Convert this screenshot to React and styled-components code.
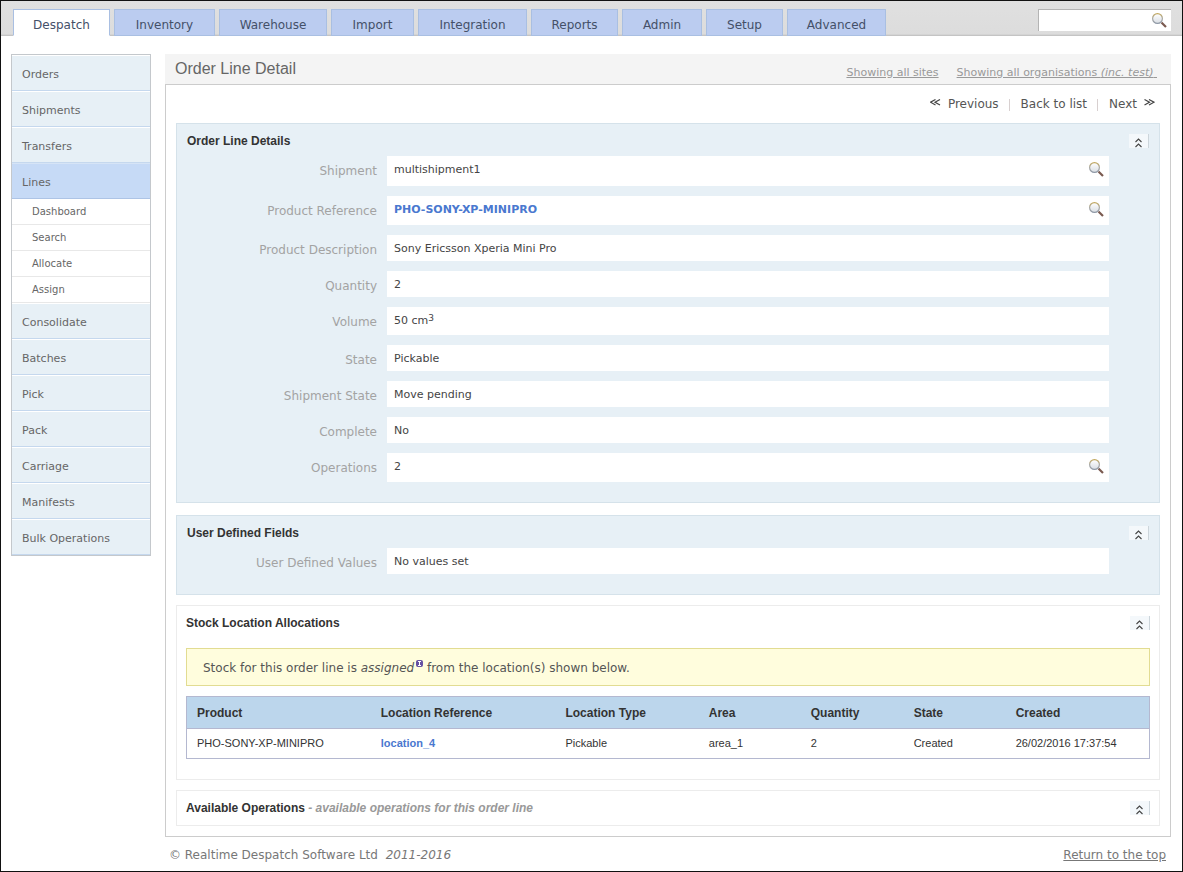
import React from "react";
import styled, { createGlobalStyle } from 'styled-components'

const GlobalStyle = createGlobalStyle`
  * { box-sizing: border-box; }
  body {
    margin: 0;
    background: #fff;
    color: #555;
    font: 12px/16px Verdana, "DejaVu Sans", sans-serif;
  }
  a { color: inherit; text-decoration: none; }
  ul { list-style: none; margin: 0; padding: 0; }
  h1, h2, p { margin: 0; }
`

const Page = styled.div`
  border: 1px solid #111;
  min-height: 100vh;
`

const Header = styled.header`
  display: flex;
  justify-content: space-between;
  align-items: flex-start;
  padding: 8px 11px 0 12px;
  height: 35px;
  background: linear-gradient(#e0e0e0, #dcdcdc);
  box-shadow: inset 0 -1px 0 #c4c4c4, inset 0 -2px 0 #d4d4d4;
`

const Tabs = styled.nav`
  display: flex;
  gap: 4px;
`

const Tab = styled.a`
  flex: 0 0 auto;
  min-width: ${props => props.$width}px;
  height: 27px;
  padding: 7px 10px 0;
  text-align: center;
  border: 1px solid #a9bfe2;
  border-bottom-color: ${props => props.$active ? '#fff' : '#a9bfe2'};
  background: ${props => props.$active ? '#fff' : '#bbccf0'};
  color: #445068;
`

const SearchForm = styled.form`
  display: flex;
  align-items: center;
  width: 133px;
  height: 22px;
  padding-right: 4px;
  background: #fff;
  border: solid #b4b4b4;
  border-width: 1px 0 0 1px;
`

const SearchInput = styled.input`
  flex: 1;
  min-width: 0;
  border: 0;
  outline: 0;
  background: transparent;
  font: inherit;
`

const IconButton = styled.button`
  display: flex;
  padding: 0;
  border: 0;
  background: none;
  cursor: pointer;
`

const Columns = styled.div`
  display: flex;
  align-items: flex-start;
  gap: 14px;
  padding: 18px 11px 0 10px;
`

const SideNav = styled.nav`
  flex: 0 0 140px;
  border: 1px solid #c4c8cc;
`

const SideLink = styled.a`
  display: block;
  height: 36px;
  padding: 11px 10px 0;
  font-size: 11px;
  border-top: 1px solid ${props => props.$active ? '#d6e4f6' : '#fff'};
  border-bottom: 1px solid ${props => props.$active ? '#adc4e6' : '#c5d8ee'};
  background: ${props => props.$active ? '#c6daf6' : '#e7f0f6'};
  color: #666;
`

const SubLink = styled.a`
  display: block;
  height: 26px;
  padding: 5px 20px 0;
  font-size: 10px;
  border-bottom: 1px solid #e8e8e8;
  color: #666;
`

const Main = styled.main`
  flex: 1;
  min-width: 0;
`

const TitleBar = styled.div`
  display: flex;
  justify-content: space-between;
  height: 30px;
  padding: 5px 14px 0 10px;
  background: #f4f4f4;
`

const Title = styled.h1`
  font: 16px/20px Arial, "Liberation Sans", sans-serif;
  color: #666;
`

const Filters = styled.div`
  display: flex;
  gap: 18px;
  padding-top: 6px;
  font-size: 11px;
  color: #999;
  white-space: pre;

  a { text-decoration: underline; }
`

const Content = styled.div`
  padding: 10px;
  border: 1px solid #ccc;
`

const Pager = styled.nav`
  display: flex;
  justify-content: flex-end;
  height: 28px;
  padding: 1px 5px 0 0;
  color: #555;

  a { display: flex; gap: 7px; }
  a + a::before {
    content: "";
    width: 1px;
    height: 12px;
    margin: 3px 4px 0 10px;
    background: #d8d0d0;
  }
  svg { margin-top: 3px; }
`

const Panel = styled.section`
  padding: ${props => props.$plain ? '0 9px' : '0 10px 20px'};
  margin-bottom: ${props => props.$gap || 0}px;
  border: 1px solid ${props => props.$plain ? '#ececec' : '#d5e2ea'};
  background: ${props => props.$plain ? '#fff' : '#e7f0f6'};
`

const PanelHead = styled.div`
  display: flex;
  justify-content: space-between;
  align-items: flex-start;
  height: ${props => props.$height}px;
  padding-top: 10px;
`

const PanelTitle = styled.h2`
  font: bold 12px/14px Arial, "Liberation Sans", sans-serif;
  color: #333;

  em { color: #999; }
`

const Collapse = styled.button`
  display: flex;
  justify-content: center;
  align-items: flex-end;
  width: 20px;
  height: 14px;
  padding: 0;
  border: 0;
  border-right: 1px solid #ccd5db;
  background: #f4f8fb;
  cursor: pointer;
`

const Fields = styled.dl`
  display: flex;
  flex-direction: column;
  gap: 10px;
  margin: 0 40px 0 0;
`

const Field = styled.div`
  display: flex;
  gap: 10px;
  min-height: ${props => props.$height}px;

  dt {
    flex: 0 0 190px;
    padding-top: 7px;
    text-align: right;
    color: #a3a3a3;
  }
  dd {
    flex: 1;
    display: flex;
    justify-content: space-between;
    align-items: flex-start;
    margin: 0;
    padding: 6px 5px 0 7px;
    background: #fff;
    color: #444;
    font-size: 11px;
  }
  sup { font-size: 9px; line-height: 0; vertical-align: 3px; }
`

const ValueLink = styled.a`
  font-weight: bold;
  color: #4a78cf;
`

const Notice = styled.p`
  margin-bottom: 10px;
  padding: 11px 16px 9px;
  border: 1px solid #e2dc92;
  background: #fffddd;

  svg { margin: 0 0 0 2px; vertical-align: 5px; }
`

const Table = styled.table`
  width: 100%;
  margin-bottom: 20px;
  table-layout: fixed;
  border-collapse: separate;
  border-spacing: 0;
  border: 1px solid #b4b8d0;
  font: 11px/14px Arial, "Liberation Sans", sans-serif;
  text-align: left;
  color: #333;

  th {
    height: 32px;
    padding: 0 10px;
    font-size: 12px;
    background: #bcd6ec;
    border-bottom: 1px solid #b4b8d0;
  }
  td { height: 29px; padding: 0 10px 2px; }
`

const Footer = styled.footer`
  display: flex;
  justify-content: space-between;
  padding: 10px 5px 0 4px;
  color: #777;

  a { text-decoration: underline; }
  em { margin-left: 4px; }
`

const tabs = [
  ['Despatch', 97], ['Inventory', 101], ['Warehouse', 108], ['Import', 83], ['Integration', 109],
  ['Reports', 87], ['Admin', 80], ['Setup', 77], ['Advanced', 99],
]

const sections = ['Orders', 'Shipments', 'Transfers', 'Lines', 'Consolidate', 'Batches', 'Pick', 'Pack', 'Carriage', 'Manifests', 'Bulk Operations']
const lineLinks = ['Dashboard', 'Search', 'Allocate', 'Assign']

const details = [
  { label: 'Shipment', value: 'multishipment1', height: 30, lookup: true },
  { label: 'Product Reference', value: <ValueLink href="#product">PHO-SONY-XP-MINIPRO</ValueLink>, height: 29, lookup: true },
  { label: 'Product Description', value: 'Sony Ericsson Xperia Mini Pro' },
  { label: 'Quantity', value: '2' },
  { label: 'Volume', value: <span>50 cm<sup>3</sup></span>, height: 28 },
  { label: 'State', value: 'Pickable' },
  { label: 'Shipment State', value: 'Move pending' },
  { label: 'Complete', value: 'No' },
  { label: 'Operations', value: '2', height: 29, lookup: true },
]

const columns = [
  ['Product', '19.1%'], ['Location Reference', '19.2%'], ['Location Type', '14.9%'], ['Area', '10.6%'],
  ['Quantity', '10.7%'], ['State', '10.6%'], ['Created', '14.9%'],
]

function Magnifier() {
  return (
    <svg width="15" height="15" viewBox="0 0 15 15" fill="none" aria-hidden="true">
      <defs>
        <linearGradient id="lens" x1="0" y1="0" x2="0" y2="1">
          <stop offset="0" stopColor="#fff" />
          <stop offset="1" stopColor="#d9dee4" />
        </linearGradient>
        <linearGradient id="rim" x1="0" y1="0" x2="0" y2="1">
          <stop offset="0" stopColor="#c2a85e" />
          <stop offset="0.5" stopColor="#a8a8a4" />
          <stop offset="1" stopColor="#8e98a6" />
        </linearGradient>
      </defs>
      <path d="M9.5 9.5L14 14" stroke="#7a5a50" strokeWidth="2.2" />
      <circle cx="5.5" cy="5.5" r="4.9" fill="url(#lens)" stroke="url(#rim)" strokeWidth="1.2" />
    </svg>
  )
}

function DoubleUp() {
  return (
    <svg width="7" height="10" viewBox="0 0 7 10" fill="none" stroke="#444" strokeWidth="1.1" aria-hidden="true">
      <path d="M.5 4L3.5 1L6.5 4M.5 9L3.5 6L6.5 9" />
    </svg>
  )
}

function DoubleArrow({ next }) {
  return (
    <svg width="11" height="7" viewBox="0 0 11 7" fill="none" stroke="#444" strokeWidth="1.2" aria-hidden="true">
      <path d={next ? "M.5 .5L5.5 3.2L.5 6M5 .5L10 3.2L5 6" : "M5.5 .5L.5 3.2L5.5 6M10 .5L5 3.2L10 6"} />
    </svg>
  )
}

function InfoIcon() {
  return (
    <svg width="7" height="7" viewBox="0 0 7 7" aria-hidden="true">
      <rect width="7" height="7" rx="2" fill="#6651a3" />
      <path d="M2 1.5H5M3.5 1.5V5.5M2 5.5H5" stroke="#fff" fill="none" />
    </svg>
  )
}

function Head({ children, height }) {
  return (
    <PanelHead $height={height}>
      <PanelTitle>{children}</PanelTitle>
      <Collapse type="button" aria-label="Collapse"><DoubleUp /></Collapse>
    </PanelHead>
  )
}

function DetailField({ label, value, height = 26, lookup }) {
  return (
    <Field $height={height}>
      <dt>{label}</dt>
      <dd>
        {value}
        {lookup && <IconButton type="button" aria-label={`View ${label}`}><Magnifier /></IconButton>}
      </dd>
    </Field>
  )
}

export default function App() {
  return (
    <Page id="top">
      <GlobalStyle />

      <Header>
        <Tabs>
          {tabs.map(([name, width], i) => (
            <Tab key={name} href={`#${name}`} $width={width} $active={i === 0}>{name}</Tab>
          ))}
        </Tabs>
        <SearchForm>
          <SearchInput type="text" aria-label="Search" />
          <IconButton type="button" aria-label="Search"><Magnifier /></IconButton>
        </SearchForm>
      </Header>

      <Columns>
        <SideNav>
          <ul>
            {sections.map(name => (
              <li key={name}>
                <SideLink href={`#${name}`} $active={name === 'Lines'}>{name}</SideLink>
                {name === 'Lines' && (
                  <ul>
                    {lineLinks.map(link => <li key={link}><SubLink href={`#${link}`}>{link}</SubLink></li>)}
                  </ul>
                )}
              </li>
            ))}
          </ul>
        </SideNav>

        <Main>
          <TitleBar>
            <Title>Order Line Detail</Title>
            <Filters>
              <a href="#sites">Showing all sites</a>
              <a href="#organisations">Showing all organisations <em>(inc. test)</em> </a>
            </Filters>
          </TitleBar>

          <Content>
            <Pager>
              <a href="#previous"><DoubleArrow />Previous</a>
              <a href="#list">Back to list</a>
              <a href="#next">Next<DoubleArrow next /></a>
            </Pager>

            <Panel $gap={12}>
              <Head height={32}>Order Line Details</Head>
              <Fields>
                {details.map(field => <DetailField key={field.label} {...field} />)}
              </Fields>
            </Panel>

            <Panel $gap={10}>
              <Head height={32}>User Defined Fields</Head>
              <Fields>
                <DetailField label="User Defined Values" value="No values set" />
              </Fields>
            </Panel>

            <Panel $plain $gap={10}>
              <Head height={42}>Stock Location Allocations</Head>
              <Notice>
                Stock for this order line is <em>assigned</em><InfoIcon /> from the location(s) shown below.
              </Notice>
              <Table>
                <colgroup>
                  {columns.map(([name, width]) => <col key={name} width={width} />)}
                </colgroup>
                <thead>
                  <tr>{columns.map(([name]) => <th key={name} scope="col">{name}</th>)}</tr>
                </thead>
                <tbody>
                  <tr>
                    <td>PHO-SONY-XP-MINIPRO</td>
                    <td><ValueLink href="#location">location_4</ValueLink></td>
                    <td>Pickable</td>
                    <td>area_1</td>
                    <td>2</td>
                    <td>Created</td>
                    <td>26/02/2016 17:37:54</td>
                  </tr>
                </tbody>
              </Table>
            </Panel>

            <Panel $plain>
              <Head height={34}>Available Operations <em>- available operations for this order line</em></Head>
            </Panel>
          </Content>

          <Footer>
            <span>© Realtime Despatch Software Ltd <em>2011-2016</em></span>
            <a href="#top">Return to the top</a>
          </Footer>
        </Main>
      </Columns>
    </Page>
  )
}
